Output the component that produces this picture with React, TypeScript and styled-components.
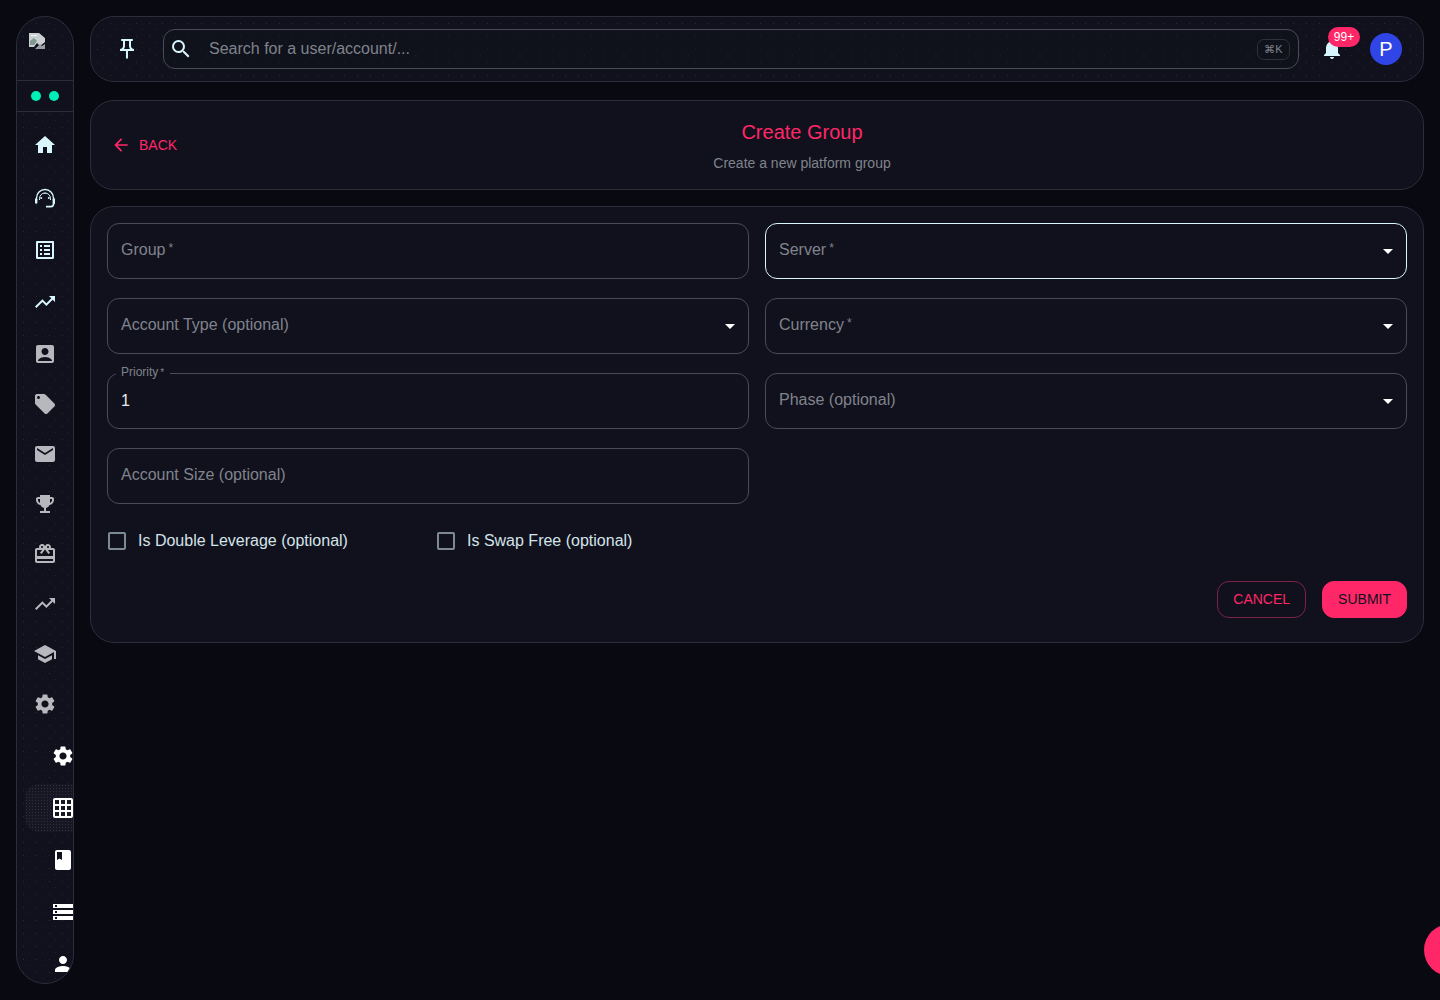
import * as React from "react";
import styled, { createGlobalStyle } from "styled-components";
import {
  MdHome,
  MdOutlineListAlt,
  MdTrendingUp,
  MdAccountBox,
  MdLocalOffer,
  MdEmail,
  MdEmojiEvents,
  MdOutlineRedeem,
  MdSchool,
  MdSettings,
  MdGridOn,
  MdBook,
  MdStorage,
  MdPerson,
  MdOutlinePushPin,
  MdSearch,
  MdNotifications,
  MdArrowBack,
  MdArrowDropDown,
  MdOutlineCheckBoxOutlineBlank,
} from "react-icons/md";

const Pink = "#ff2768";
const IceBlue = "#d9f6ff";
const Line = "#2c2d3a";
const FieldLine = "#4a4b57";
const Panel = "#10111c";
const Muted = "#80838c";

const dots = `
  background-image:
    radial-gradient(rgba(255, 255, 255, 0.11) 0.6px, transparent 0.8px),
    radial-gradient(rgba(255, 255, 255, 0.07) 0.6px, transparent 0.8px);
  background-size: 13px 13px, 13px 13px;
  background-position: 0 0, 6px 6px;
`;

const GlobalStyle = createGlobalStyle`
  html, body {
    margin: 0;
    height: 100%;
    overflow: hidden;
    background: #090a11;
    font-family: "Liberation Sans", Arial, sans-serif;
  }
`;

const Page = styled.div`
  display: flex;
  gap: 16px;
  height: 1000px;
  padding: 16px;
  box-sizing: border-box;
`;

const Sidebar = styled.nav`
  flex: 0 0 58px;
  box-sizing: border-box;
  height: 968px;
  background-color: ${Panel};
  ${dots}
  border: 1px solid ${Line};
  border-radius: 29px;
  overflow: hidden;
  display: flex;
  flex-direction: column;
`;

const LogoArea = styled.div`
  flex: 0 0 64px;
  box-sizing: border-box;
  padding: 16px 0 0 12px;
  border-bottom: 1px solid ${Line};
`;

const StatusRow = styled.div`
  flex: 0 0 31px;
  box-sizing: border-box;
  display: flex;
  align-items: center;
  justify-content: center;
  gap: 8px;
  background: ${Panel};
  border-bottom: 1px solid ${Line};
`;

const StatusDot = styled.span`
  width: 10px;
  height: 10px;
  border-radius: 50%;
  background: #00efb7;
`;

const NavList = styled.div`
  flex: none;
  display: flex;
  flex-direction: column;
  align-items: center;
  padding-top: 6px;
`;

const NavItem = styled.div<{ $h?: number; $color?: string }>`
  flex: 0 0 ${(p) => p.$h ?? 50}px;
  width: 100%;
  display: flex;
  align-items: center;
  justify-content: center;
  font-size: 24px;
  color: ${(p) => p.$color ?? "#b6b8be"};
`;

const SubList = styled.div`
  display: flex;
  flex-direction: column;
  margin-top: 3px;
  padding-left: 8px;
  width: 100%;
  box-sizing: border-box;
`;

const SubItem = styled.div<{ $active?: boolean }>`
  flex: 0 0 48px;
  margin-bottom: 4px;
  display: flex;
  align-items: center;
  padding-left: 26px;
  width: 70px;
  font-size: 24px;
  color: #ffffff;
  border-radius: 14px 0 0 14px;
  ${(p) =>
    p.$active &&
    `
    background-color: #161722;
    background-image: radial-gradient(rgba(255, 255, 255, 0.1) 0.5px, transparent 0.7px);
    background-size: 3px 3px;
  `}
`;

const Main = styled.main`
  flex: 1;
  min-width: 0;
  display: flex;
  flex-direction: column;
`;

const TopBar = styled.header`
  flex: 0 0 66px;
  box-sizing: border-box;
  background-color: ${Panel};
  ${dots}
  border: 1px solid ${Line};
  border-radius: 24px;
  display: flex;
  align-items: center;
  padding: 0 21px 0 24px;
  margin-bottom: 18px;
`;

const PinButton = styled.div`
  width: 24px;
  height: 24px;
  font-size: 24px;
  color: ${IceBlue};
  margin-right: 24px;
  display: flex;
`;

const SearchBox = styled.div`
  flex: 1;
  height: 40px;
  box-sizing: border-box;
  border: 1px solid ${FieldLine};
  border-radius: 12px;
  display: flex;
  align-items: center;
  padding: 0 8px 0 5px;
  color: ${IceBlue};
  font-size: 24px;
  background: rgba(16, 17, 28, 0.4);
`;

const SearchText = styled.span`
  flex: 1;
  margin-left: 16px;
  font-size: 16px;
  color: ${Muted};
`;

const Kbd = styled.span`
  width: 33px;
  height: 21px;
  box-sizing: border-box;
  border: 1px solid #2f303c;
  border-radius: 7px;
  display: flex;
  align-items: center;
  justify-content: center;
  font-size: 11px;
  color: ${Muted};
`;

const BellWrap = styled.div`
  position: relative;
  width: 24px;
  height: 24px;
  font-size: 24px;
  color: ${IceBlue};
  margin: 0 26px 0 21px;
  display: flex;
`;

const Badge = styled.span`
  position: absolute;
  left: 8px;
  top: -10px;
  width: 32px;
  height: 20px;
  border-radius: 10px;
  background: ${Pink};
  color: #ffffff;
  font-size: 12px;
  display: flex;
  align-items: center;
  justify-content: center;
`;

const Avatar = styled.div`
  width: 32px;
  height: 32px;
  border-radius: 50%;
  background: #2f45e6;
  color: #ffffff;
  font-size: 20px;
  display: flex;
  align-items: center;
  justify-content: center;
`;

const Card = styled.section`
  background: ${Panel};
  border: 1px solid ${Line};
  border-radius: 24px;
  box-sizing: border-box;
`;

const HeaderCard = styled(Card)`
  flex: 0 0 90px;
  margin-bottom: 16px;
  display: grid;
  grid-template-columns: 90px 1fr;
  align-items: center;
  padding: 0 22px;
`;

const BackLink = styled.div`
  display: flex;
  align-items: center;
  gap: 8px;
  margin-left: -2px;
  color: ${Pink};
  font-size: 14px;
`;

const BackIcon = styled.span`
  font-size: 20px;
  display: flex;
`;

const TitleBlock = styled.div`
  text-align: center;
  margin-top: 2px;
`;

const Title = styled.h1`
  margin: 0 0 11px;
  font-size: 20px;
  line-height: 24px;
  font-weight: 400;
  color: ${Pink};
`;

const Subtitle = styled.p`
  margin: 0;
  font-size: 14px;
  line-height: 17px;
  color: ${Muted};
`;

const FormCard = styled(Card)`
  flex: 0 0 437px;
  padding: 16px;
  display: flex;
  flex-direction: column;
`;

const FieldGrid = styled.div`
  display: grid;
  grid-template-columns: 1fr 1fr;
  column-gap: 16px;
  row-gap: 19px;
`;

const Field = styled.div<{ $focused?: boolean }>`
  position: relative;
  height: 56px;
  box-sizing: border-box;
  border: 1px solid ${(p) => (p.$focused ? IceBlue : FieldLine)};
  border-radius: 12px;
  display: flex;
  align-items: center;
  padding: 0 13px;
  font-size: 16px;
  color: ${Muted};
`;

const Required = styled.span`
  font-size: 12px;
  margin-left: 3px;
  align-self: flex-start;
  line-height: 15px;
`;

const FieldText = styled.span`
  flex: 1;
  display: flex;
  align-items: center;
  padding-bottom: 2px;
`;

const FloatLabel = styled.span`
  position: absolute;
  left: 8px;
  top: -9px;
  padding: 0 6px 0 5px;
  background: ${Panel};
  font-size: 12px;
  line-height: 15px;
  color: ${Muted};
`;

const LabelStar = styled.span`
  margin-left: 2px;
  font-size: 10px;
`;

const Value = styled.span`
  color: #e8eaee;
`;

const Caret = styled.span`
  position: absolute;
  right: 6px;
  top: 15px;
  font-size: 24px;
  color: #ffffff;
  display: flex;
`;

const CheckRow = styled.div`
  display: flex;
  align-items: center;
  margin-top: 25px;
  height: 24px;
`;

const CheckItem = styled.label<{ $w: number }>`
  width: ${(p) => p.$w}px;
  display: flex;
  align-items: center;
  gap: 9px;
  margin-left: -2px;
  margin-right: 2px;
  font-size: 16px;
  color: #d5e3ea;
`;

const CheckBox = styled.span`
  font-size: 24px;
  color: #7d8a94;
  display: flex;
`;

const Actions = styled.div`
  display: flex;
  justify-content: flex-end;
  gap: 16px;
  margin-top: 28px;
`;

const Button = styled.button<{ $filled?: boolean }>`
  height: 37px;
  box-sizing: border-box;
  padding: 0 15px 2px;
  border-radius: 12px;
  font-family: inherit;
  font-size: 14px;
  border: 1px solid ${(p) => (p.$filled ? Pink : "#7c2347")};
  background: ${(p) => (p.$filled ? Pink : "transparent")};
  color: ${(p) => (p.$filled ? "#10111c" : Pink)};
`;

const Fab = styled.div`
  position: fixed;
  left: 1424px;
  top: 924px;
  width: 52px;
  height: 52px;
  border-radius: 50%;
  background: ${Pink};
`;

const BrokenImage = () => (
  <svg width="16" height="16" viewBox="0 0 16 16">
    <path d="M0 0h10l6 5v4l-5 4-3-3-3 4H0z" fill="#c9cfd3" />
    <path d="M1 8l4-3 3 3-3 4H1z" fill="#7f9a8c" />
    <path d="M2 2h6v1H2z" fill="#f2f4f5" />
    <path d="M16 11v5H6l5-5 2 2z" fill="#9a9da1" />
  </svg>
);

const HeadsetFace = () => (
  <svg width="24" height="24" viewBox="0 0 24 24" fill="none" stroke="currentColor">
    <path d="M3.5 14v-2a8.5 8.5 0 0 1 17 0v2" strokeWidth="1.4" />
    <path d="M3.2 13.5v3M20.8 13.5v3.5" strokeWidth="2.4" strokeLinecap="round" />
    <path d="M20.5 17.5v.5a2.6 2.6 0 0 1-2.6 2.6H13" strokeWidth="1.6" />
    <path d="M6.5 14v-1.5a5.5 5.5 0 0 1 11 0V14" strokeWidth="1" />
    <path d="M12 6.5v1.5" strokeWidth="1" />
    <circle cx="8.2" cy="12" r="1" fill="currentColor" stroke="none" />
    <circle cx="15.8" cy="12" r="1" fill="currentColor" stroke="none" />
  </svg>
);

export default function App() {
  return (
    <>
      <GlobalStyle />
      <Page>
        <Sidebar>
          <LogoArea>
            <BrokenImage />
          </LogoArea>
          <StatusRow>
            <StatusDot />
            <StatusDot />
          </StatusRow>
          <NavList>
            <NavItem $h={54} $color={IceBlue}><MdHome /></NavItem>
            <NavItem $h={52} $color={IceBlue}><HeadsetFace /></NavItem>
            <NavItem $h={52} $color={IceBlue}><MdOutlineListAlt /></NavItem>
            <NavItem $h={52} $color={IceBlue}><MdTrendingUp /></NavItem>
            <NavItem $h={51}><MdAccountBox /></NavItem>
            <NavItem><MdLocalOffer /></NavItem>
            <NavItem><MdEmail /></NavItem>
            <NavItem><MdEmojiEvents /></NavItem>
            <NavItem><MdOutlineRedeem /></NavItem>
            <NavItem><MdTrendingUp /></NavItem>
            <NavItem><MdSchool /></NavItem>
            <NavItem><MdSettings /></NavItem>
            <SubList>
              <SubItem><MdSettings /></SubItem>
              <SubItem $active><MdGridOn /></SubItem>
              <SubItem><MdBook /></SubItem>
              <SubItem><MdStorage /></SubItem>
              <SubItem><MdPerson /></SubItem>
            </SubList>
          </NavList>
        </Sidebar>
        <Main>
          <TopBar>
            <PinButton><MdOutlinePushPin /></PinButton>
            <SearchBox>
              <MdSearch />
              <SearchText>Search for a user/account/...</SearchText>
              <Kbd>⌘K</Kbd>
            </SearchBox>
            <BellWrap>
              <MdNotifications />
              <Badge>99+</Badge>
            </BellWrap>
            <Avatar>P</Avatar>
          </TopBar>
          <HeaderCard>
            <BackLink>
              <BackIcon><MdArrowBack /></BackIcon>
              BACK
            </BackLink>
            <TitleBlock>
              <Title>Create Group</Title>
              <Subtitle>Create a new platform group</Subtitle>
            </TitleBlock>
          </HeaderCard>
          <FormCard>
            <FieldGrid>
              <Field>
                <FieldText>Group<Required>*</Required></FieldText>
              </Field>
              <Field $focused>
                <FieldText>Server<Required>*</Required></FieldText>
                <Caret><MdArrowDropDown /></Caret>
              </Field>
              <Field>
                <FieldText>Account Type (optional)</FieldText>
                <Caret><MdArrowDropDown /></Caret>
              </Field>
              <Field>
                <FieldText>Currency<Required>*</Required></FieldText>
                <Caret><MdArrowDropDown /></Caret>
              </Field>
              <Field>
                <FloatLabel>Priority<LabelStar>*</LabelStar></FloatLabel>
                <Value>1</Value>
              </Field>
              <Field>
                <FieldText>Phase (optional)</FieldText>
                <Caret><MdArrowDropDown /></Caret>
              </Field>
              <Field>
                <FieldText>Account Size (optional)</FieldText>
              </Field>
            </FieldGrid>
            <CheckRow>
              <CheckItem $w={329}>
                <CheckBox><MdOutlineCheckBoxOutlineBlank /></CheckBox>
                Is Double Leverage (optional)
              </CheckItem>
              <CheckItem $w={240}>
                <CheckBox><MdOutlineCheckBoxOutlineBlank /></CheckBox>
                Is Swap Free (optional)
              </CheckItem>
            </CheckRow>
            <Actions>
              <Button>CANCEL</Button>
              <Button $filled>SUBMIT</Button>
            </Actions>
          </FormCard>
        </Main>
      </Page>
      <Fab />
    </>
  );
}
